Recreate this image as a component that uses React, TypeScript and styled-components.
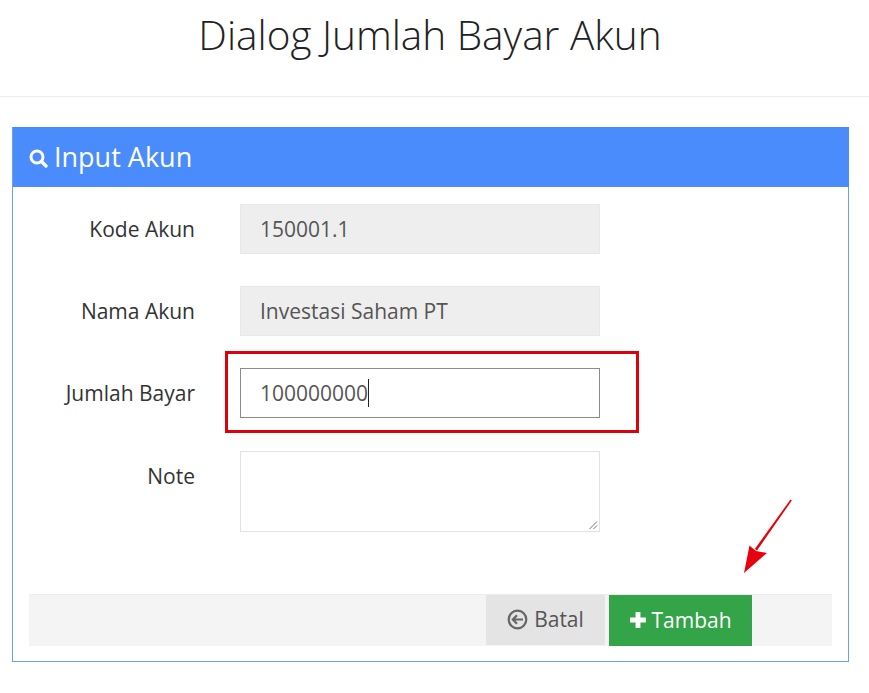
import React from "react";
import styled, { createGlobalStyle } from "styled-components";

const Global = createGlobalStyle`
  html, body { margin: 0; padding: 0; background: #fff; }
  body { font-family: "Open Sans", "Liberation Sans", sans-serif; color: #333; }
  * { box-sizing: border-box; }
`;
const Page = styled.div`
  position: relative;
  width: 869px;
  height: 693px;
  overflow: hidden;
`;
const TitleBar = styled.header`
  height: 97px;
  padding-top: 8px;
  border-bottom: 1px solid #eee;
  text-align: center;
`;
const Title = styled.h1`
  margin: 0;
  padding-right: 9px;
  font-size: 40.5px;
  line-height: 54px;
  font-weight: 300;
  color: #222;
`;
const Panel = styled.section`
  margin: 30px 0 0 12px;
  width: 837px;
  height: 535px;
  border: 1px solid #6f9fe8;
  border-top: 0;
`;
const PanelHead = styled.div`
  height: 60px;
  margin: 0 -1px 0 0;
  padding: 0 0 2px 16px;
  display: flex;
  align-items: center;
  gap: 6px;
  background: #4a8cfb;
  color: #fff;
  font-size: 27px;
`;
const Form = styled.div`
  padding: 17px 0 0;
  display: flex;
  flex-direction: column;
  gap: 32px;
`;
const Row = styled.div<{ $nudge?: boolean }>`
  display: flex;
  align-items: flex-start;
  gap: 45px;
  margin-top: ${(p) => (p.$nudge ? 1 : 0)}px;
`;
const Label = styled.label`
  width: 182px;
  text-align: right;
  font-size: 21px;
  line-height: 50px;
  color: #333;
`;
const Field = styled.div<{ $state: "readonly" | "active" }>`
  width: 360px;
  height: 50px;
  padding: 0 0 0 19px;
  display: flex;
  align-items: center;
  font-size: 21px;
  color: #555;
  background: ${(p) => (p.$state === "readonly" ? "#eee" : "#fff")};
  border: 1px solid ${(p) => (p.$state === "readonly" ? "#e8e8e8" : "#8c8c8c")};
`;
const Caret = styled.span`
  width: 1px;
  height: 28px;
  background: #222;
`;
const NoteBox = styled.div`
  position: relative;
  width: 360px;
  height: 81px;
  border: 1px solid #e2e2e2;
`;
const Grip = styled.svg`
  position: absolute;
  right: 1px;
  bottom: 1px;
`;
const Footer = styled.div`
  margin: 62px 16px 0;
  height: 52px;
  padding-right: 80px;
  display: flex;
  justify-content: flex-end;
  gap: 4px;
  background: #f4f4f4;
  border-top: 1px solid #ececec;
`;
const Button = styled.div<{ $kind: "plain" | "ok" }>`
  width: ${(p) => (p.$kind === "ok" ? 143 : 119)}px;
  height: ${(p) => (p.$kind === "ok" ? 51 : 50)}px;
  display: flex;
  align-items: center;
  justify-content: center;
  gap: ${(p) => (p.$kind === "ok" ? 4 : 6)}px;
  font-size: 21px;
  padding-bottom: 2px;
  color: ${(p) => (p.$kind === "ok" ? "#fff" : "#555")};
  background: ${(p) => (p.$kind === "ok" ? "#33a447" : "#e4e4e4")};
`;
const Highlight = styled.div`
  position: absolute;
  left: 225px;
  top: 351px;
  width: 414px;
  height: 82px;
  border: 3px solid #e0000c;
`;
const Arrow = styled.svg`
  position: absolute;
  left: 740px;
  top: 495px;
`;

export default function App() {
  return (
    <Page>
      <Global />
      <TitleBar>
        <Title>Dialog Jumlah Bayar Akun</Title>
      </TitleBar>
      <Panel>
        <PanelHead>
          <svg width="19" height="19" viewBox="0 0 19 19" fill="none" stroke="#fff" style={{ marginTop: 4 }}>
            <circle cx="8" cy="8" r="6" strokeWidth="3" />
            <path d="M12.5 12.5L17 17" strokeWidth="3.4" strokeLinecap="round" />
          </svg>
          Input Akun
        </PanelHead>
        <Form>
          <Row>
            <Label>Kode Akun</Label>
            <Field $state="readonly">150001.1</Field>
          </Row>
          <Row>
            <Label>Nama Akun</Label>
            <Field $state="readonly">Investasi Saham PT</Field>
          </Row>
          <Row>
            <Label>Jumlah Bayar</Label>
            <Field $state="active">
              100000000
              <Caret />
            </Field>
          </Row>
          <Row $nudge>
            <Label>Note</Label>
            <NoteBox>
              <Grip width="10" height="10" viewBox="0 0 10 10" stroke="#777" strokeWidth="1">
                <path d="M1.5 9L9 1.5M5.5 9L9 5.5" />
              </Grip>
            </NoteBox>
          </Row>
        </Form>
        <Footer>
          <Button $kind="plain">
            <svg width="21" height="21" viewBox="0 0 21 21" fill="none" stroke="#666">
              <circle cx="10.5" cy="10.5" r="8.8" strokeWidth="2.2" />
              <path d="M16 10.5H6M10 6.3L5.8 10.5L10 14.7" strokeWidth="2.2" />
            </svg>
            Batal
          </Button>
          <Button $kind="ok">
            <svg width="18" height="18" viewBox="0 0 17 17" fill="#fff">
              <path d="M6.2 1h4.6v5.2H16v4.6h-5.2V16H6.2v-5.2H1V6.2h5.2z" />
            </svg>
            Tambah
          </Button>
        </Footer>
      </Panel>
      <Highlight />
      <Arrow width="60" height="85" viewBox="0 0 60 85" fill="#e8000c">
        <path d="M50.5 4.5L51.8 5.5L17 55.5L14.8 54z" />
        <path d="M4 78L9.5 50.5L16 56L27 58z" />
      </Arrow>
    </Page>
  );
}
